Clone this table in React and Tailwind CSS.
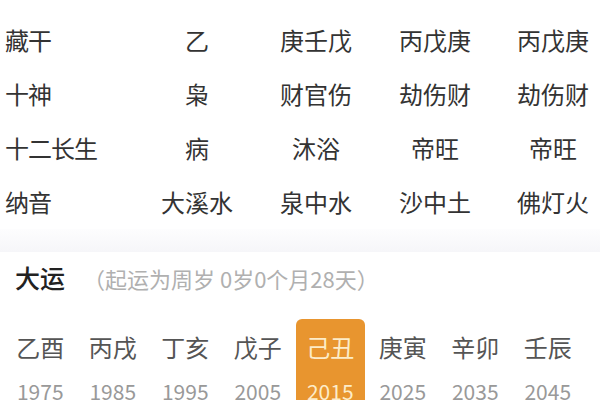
import React from 'react';

const rows = [
  { label: '藏干', values: ['乙', '庚壬戊', '丙戊庚', '丙戊庚'] },
  { label: '十神', values: ['枭', '财官伤', '劫伤财', '劫伤财'] },
  { label: '十二长生', values: ['病', '沐浴', '帝旺', '帝旺'] },
  { label: '纳音', values: ['大溪水', '泉中水', '沙中土', '佛灯火'] },
];

const dayun = [
  { gz: '乙酉', year: 1975 },
  { gz: '丙戌', year: 1985 },
  { gz: '丁亥', year: 1995 },
  { gz: '戊子', year: 2005 },
  { gz: '己丑', year: 2015, active: true },
  { gz: '庚寅', year: 2025 },
  { gz: '辛卯', year: 2035 },
  { gz: '壬辰', year: 2045 },
];

const App = () => {
  return (
    <div
      className="w-[600px] h-[400px] overflow-hidden bg-white"
      style={{ fontFamily: '"Noto Sans CJK SC", "Noto Sans", sans-serif' }}
    >
      {/* Pillar details */}
      <div className="pt-[13px]">
        {rows.map((row) => (
          <div
            key={row.label}
            className="grid grid-cols-[138px_118px_120px_118px_118px] h-[54px] items-center text-[24px] text-[#333]"
          >
            <div className="pl-[5px] whitespace-nowrap tracking-[-1px]">{row.label}</div>
            {row.values.map((v, i) => (
              <div key={i} className="text-center whitespace-nowrap">
                {v}
              </div>
            ))}
          </div>
        ))}
      </div>

      {/* Divider band */}
      <div className="h-[23px] bg-gradient-to-b from-[#fdfdfe] to-[#f6f6f9]" />

      {/* Da Yun */}
      <div className="h-[52px] flex items-center pl-[15px]">
        <span className="text-[25px] font-medium text-[#222]">大运</span>
        <span className="ml-[18px] text-[22px] text-[#b0b0b0]">（起运为周岁 0岁0个月28天）</span>
      </div>

      <div className="mt-[15px] grid grid-cols-8 pl-[4px] w-[584px]">
        {dayun.map((d) => (
          <div key={d.year} className="flex justify-center">
            <div
              className={
                d.active
                  ? 'w-[69px] h-[90px] rounded-t-[6px] bg-[#e8952f] flex flex-col items-center'
                  : 'w-[69px] h-[90px] flex flex-col items-center'
              }
            >
              <div
                className={
                  d.active
                    ? 'mt-[12px] text-[24px] leading-[32px] text-[#fdecc8]'
                    : 'mt-[12px] text-[24px] leading-[32px] text-[#555]'
                }
              >
                {d.gz}
              </div>
              <div
                className={
                  d.active
                    ? 'mt-[14px] text-[21px] leading-[28px] text-[#fdecc8]'
                    : 'mt-[14px] text-[21px] leading-[28px] text-[#999]'
                }
              >
                {d.year}
              </div>
            </div>
          </div>
        ))}
      </div>
    </div>
  );
};

export default App;
